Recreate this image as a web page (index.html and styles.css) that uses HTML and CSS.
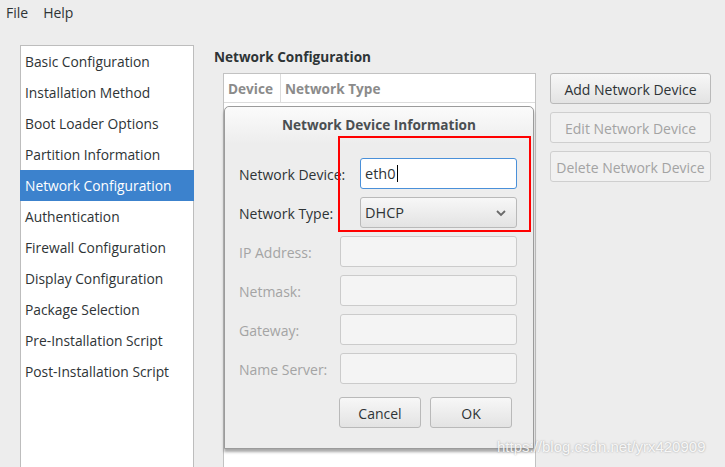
FILE: index.html
```html
<!DOCTYPE html>
<html>
<head>
<meta charset="utf-8">
<link rel="stylesheet" href="styles.css">
</head>
<body>
<div class="app">
  <div class="menubar">
    <span class="menu-item">File</span>
    <span class="menu-item">Help</span>
  </div>
  <div class="main">
    <ul class="sidebar">
      <li>Basic Configuration</li>
      <li>Installation Method</li>
      <li>Boot Loader Options</li>
      <li>Partition Information</li>
      <li class="selected">Network Configuration</li>
      <li>Authentication</li>
      <li>Firewall Configuration</li>
      <li>Display Configuration</li>
      <li>Package Selection</li>
      <li>Pre-Installation Script</li>
      <li>Post-Installation Script</li>
    </ul>
    <div class="content">
      <div class="section-title">Network Configuration</div>
      <div class="content-row">
        <div class="table">
          <div class="table-head">
            <div class="th th-device">Device</div>
            <div class="th th-type">Network Type</div>
          </div>
        </div>
        <div class="side-buttons">
          <button class="btn btn-wide">Add Network Device</button>
          <button class="btn btn-wide" disabled>Edit Network Device</button>
          <button class="btn btn-wide" disabled>Delete Network Device</button>
        </div>
      </div>
    </div>
  </div>

  <div class="dialog">
    <div class="dialog-title">Network Device Information</div>
    <div class="form">
      <div class="row row-wide">
        <label class="lbl">Network Device:</label>
        <div class="entry focused">eth0<span class="caret"></span></div>
      </div>
      <div class="row row-wide">
        <label class="lbl">Network Type:</label>
        <div class="combo"><span>DHCP</span>
          <svg class="chev" width="12" height="8" viewBox="0 0 12 8"><path d="M2 2 L6 6 L10 2" fill="none" stroke="#6a6a6a" stroke-width="1.8"/></svg>
        </div>
      </div>
      <div class="row">
        <label class="lbl dis">IP Address:</label>
        <div class="entry disabled"></div>
      </div>
      <div class="row">
        <label class="lbl dis">Netmask:</label>
        <div class="entry disabled"></div>
      </div>
      <div class="row">
        <label class="lbl dis">Gateway:</label>
        <div class="entry disabled"></div>
      </div>
      <div class="row">
        <label class="lbl dis">Name Server:</label>
        <div class="entry disabled"></div>
      </div>
    </div>
    <div class="dialog-buttons">
      <button class="btn btn-dlg">Cancel</button>
      <button class="btn btn-dlg">OK</button>
    </div>
  </div>

  <div class="annotation"></div>
  <div class="watermark">https://blog.csdn.net/yrx420909</div>
</div>
</body>
</html>
```

FILE: styles.css
```css
* { box-sizing: border-box; }
html, body { margin: 0; padding: 0; }
body {
  width: 725px;
  height: 467px;
  overflow: hidden;
  background: #ededed;
  font-family: "Open Sans", "DejaVu Sans", sans-serif;
  font-size: 14px;
  color: #2e3436;
}
.app {
  position: relative;
  width: 725px;
  height: 467px;
  overflow: hidden;
}
.menubar {
  height: 25px;
  display: flex;
  align-items: center;
  padding-left: 6px;
  gap: 15px;
  font-size: 14px;
}
.main {
  display: flex;
  padding-top: 20px;
  padding-left: 20px;
}
.sidebar {
  list-style: none;
  margin: 0;
  padding: 0;
  width: 174px;
  height: 440px;
  background: #fff;
  border: 1px solid #bdbdbd;
  flex: none;
  font-size: 13.8px;
}
.sidebar li {
  height: 31px;
  line-height: 31px;
  padding-left: 4px;
  white-space: nowrap;
}
.sidebar li.selected {
  background: #3c82cd;
  color: #fff;
  margin-left: -1px;
  margin-right: -1px;
  padding-left: 5px;
}
.content {
  margin-left: 20px;
  flex: none;
}
.section-title {
  font-weight: bold;
  font-size: 13.6px;
  height: 28px;
  line-height: 24px;
}
.content-row {
  display: flex;
  gap: 14px;
}
.table {
  margin-left: 9px;
  width: 313px;
  height: 400px;
  background: #fff;
  border: 1px solid #c2c2c2;
}
.table-head {
  display: flex;
  height: 29px;
  border-bottom: 1px solid #dcdcdc;
}
.th {
  color: #8b8b8b;
  font-weight: bold;
  font-size: 13.6px;
  line-height: 30px;
  padding-left: 4px;
}
.th-device { width: 57px; border-right: 1px solid #dcdcdc; }
.th-type { flex: 1; }
.side-buttons {
  display: flex;
  flex-direction: column;
  gap: 8px;
}
.btn {
  font-family: inherit;
  font-size: 14px;
  color: #2e3436;
  height: 31px;
  border: 1px solid #b9b9b9;
  border-radius: 3px;
  background: linear-gradient(#f7f7f7, #e3e3e3);
  padding: 2px 0 0 0;
}
.btn:disabled {
  background: #f1f1f1;
  color: #a3a3a3;
  border-color: #cfcfcf;
}
.btn-wide { width: 161px; }

.dialog {
  position: absolute;
  left: 224px;
  top: 106px;
  width: 310px;
  height: 343px;
  background: #ededed;
  border: 1px solid #9b9b9b;
  border-radius: 5px 5px 0 0;
  box-shadow: 0 3px 3px rgba(0,0,0,0.35);
  padding: 0 0 0 14px;
}
.dialog-title {
  height: 37px;
  line-height: 36px;
  text-align: center;
  font-weight: bold;
  font-size: 13.6px;
  color: #4a4f52;
  margin-left: -14px;
  background: linear-gradient(#fbfbfb, #ededed);
  border-radius: 5px 5px 0 0;
}
.form {
  display: flex;
  flex-direction: column;
  gap: 8px;
  padding-top: 14px;
}
.row {
  display: flex;
  align-items: center;
  height: 31px;
}
.lbl { width: 101px; flex: none; white-space: nowrap; padding-top: 2px; }
.row-wide .lbl { width: 121px; }
.lbl.dis { color: #a4a4a4; }
.entry, .combo {
  width: 177px;
  height: 31px;
  border: 1px solid #cbcbcb;
  border-radius: 3px;
  background: #f4f4f4;
}
.row-wide .entry, .row-wide .combo { width: 157px; }
.entry.focused {
  background: #fff;
  border-color: #4a90d9;
  padding-left: 4px;
  line-height: 29px;
  font-size: 14.5px;
  display: flex;
  align-items: center;
}
.caret {
  display: inline-block;
  width: 1px;
  height: 17px;
  background: #000;
  margin-left: 1px;
}
.combo {
  display: flex;
  align-items: center;
  justify-content: space-between;
  padding: 0 9px 0 4px;
  background: linear-gradient(#f7f7f7, #e3e3e3);
  border-color: #b9b9b9;
  font-size: 14.5px;
}
.dialog-buttons {
  display: flex;
  gap: 9px;
  padding-left: 100px;
  margin-top: 13px;
}
.btn-dlg { width: 82px; }

.annotation {
  position: absolute;
  left: 338px;
  top: 136px;
  width: 193px;
  height: 96px;
  border: 2px solid #f00;
  pointer-events: none;
}
.watermark {
  position: absolute;
  left: 497px;
  top: 438px;
  font-family: "Liberation Sans", Arial, sans-serif;
  font-size: 15px;
  color: rgba(255,255,255,0.9);
  text-shadow: 0 0 2px rgba(0,0,0,0.35);
}
```
